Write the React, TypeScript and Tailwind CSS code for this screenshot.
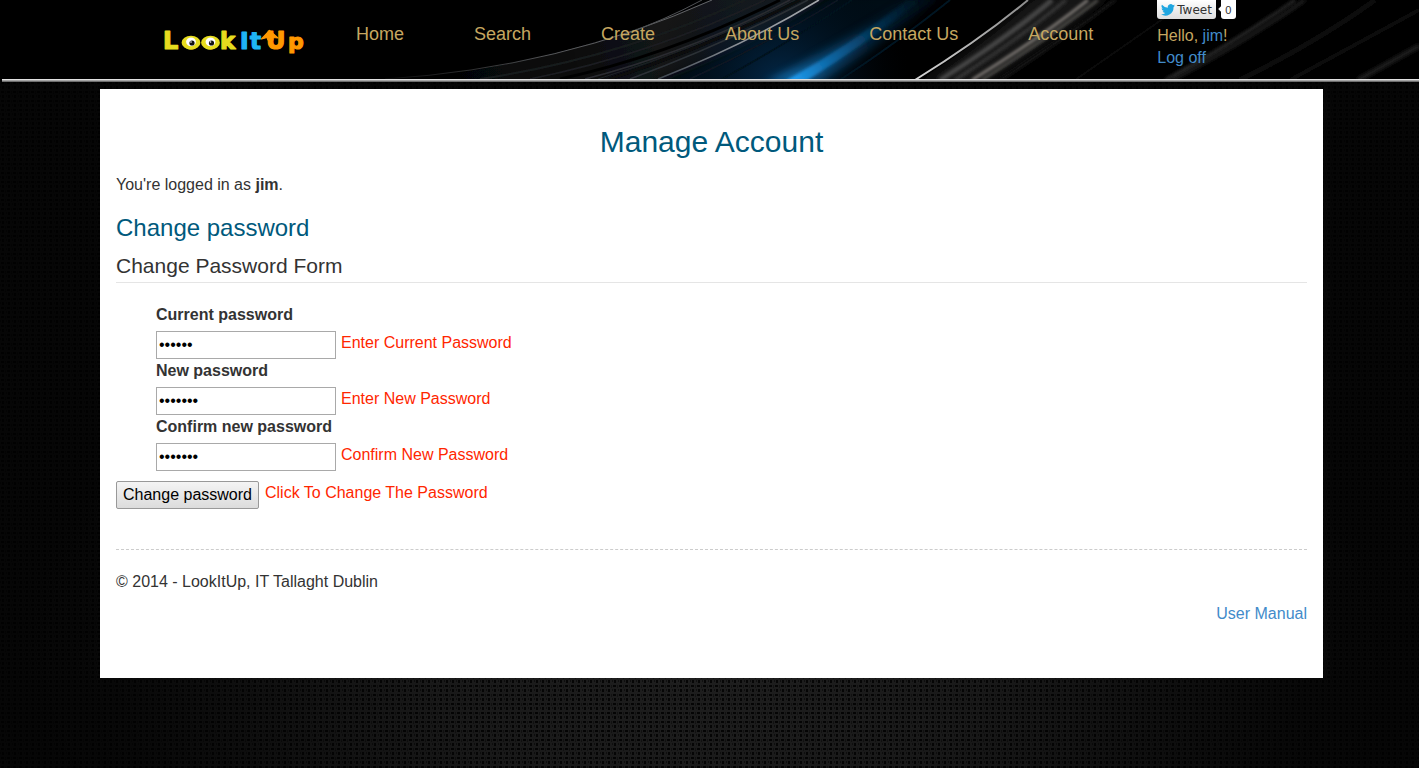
import React from "react";

const NAV = ["Home", "Search", "Create", "About Us", "Contact Us", "Account"];

const FIELDS = [
  { id: "current", label: "Current password", value: "secret", hint: "Enter Current Password" },
  { id: "new", label: "New password", value: "secret1", hint: "Enter New Password" },
  { id: "confirm", label: "Confirm new password", value: "secret1", hint: "Confirm New Password" },
];

function Streaks() {
  return (
    <svg
      className="absolute inset-0 h-full w-full"
      viewBox="0 0 1419 79"
      preserveAspectRatio="none"
      aria-hidden="true"
    >
      <defs>
        <linearGradient id="haze" x1="400" x2="740" y1="79" y2="0" gradientUnits="userSpaceOnUse">
          <stop offset="0" stopColor="#08090a" stopOpacity="0.3" />
          <stop offset="0.6" stopColor="#0e1012" />
          <stop offset="1" stopColor="#1a1b1d" />
        </linearGradient>
        <linearGradient id="fade" x1="390" x2="720" y1="0" y2="0" gradientUnits="userSpaceOnUse">
          <stop offset="0" stopColor="#77797c" stopOpacity="0.1" />
          <stop offset="0.5" stopColor="#77797c" stopOpacity="0.7" />
          <stop offset="1" stopColor="#77797c" stopOpacity="0.8" />
        </linearGradient>
        <linearGradient id="blue" x1="790" x2="920" y1="79" y2="0" gradientUnits="userSpaceOnUse">
          <stop offset="0" stopColor="#1e9cf0" />
          <stop offset="0.3" stopColor="#0d64a0" />
          <stop offset="0.65" stopColor="#04304f" />
          <stop offset="1" stopColor="#010f1a" />
        </linearGradient>
        <radialGradient id="glow" cx="780" cy="85" r="130" gradientUnits="userSpaceOnUse">
          <stop offset="0" stopColor="#03294a" />
          <stop offset="1" stopColor="#01060c" stopOpacity="0" />
        </radialGradient>
        <linearGradient id="silver" x1="915" x2="1030" y1="79" y2="0" gradientUnits="userSpaceOnUse">
          <stop offset="0" stopColor="#d5d5d5" />
          <stop offset="1" stopColor="#8b8b8b" />
        </linearGradient>
        <linearGradient id="steel" x1="658" x2="819" y1="79" y2="0" gradientUnits="userSpaceOnUse">
          <stop offset="0" stopColor="#3d444c" />
          <stop offset="0.5" stopColor="#8d9299" />
          <stop offset="1" stopColor="#a4a7aa" />
        </linearGradient>
        <filter id="soft1" x="-10%" y="-10%" width="120%" height="120%">
          <feGaussianBlur stdDeviation="0.5" />
        </filter>
        <filter id="soft2" x="-10%" y="-10%" width="120%" height="120%">
          <feGaussianBlur stdDeviation="1.4" />
        </filter>
        <filter id="soft3" x="-20%" y="-20%" width="140%" height="140%">
          <feGaussianBlur stdDeviation="4" />
        </filter>
      </defs>
      <rect width="1419" height="79" fill="#000" />
      <path d="M400 79 Q560 66 720 -4 L830 -4 Q770 40 660 83 Z" fill="url(#haze)" filter="url(#soft1)" />
      <path d="M650 83 Q740 55 830 -4 H940 Q860 50 800 83 Z" fill="#010812" filter="url(#soft3)" />
      <rect x="600" width="330" height="79" fill="url(#glow)" />
      <g fill="none" filter="url(#soft1)">
        <path d="M385 79 Q560 68 712 0" stroke="url(#fade)" strokeWidth="1" />
        <path d="M620 36 Q665 20 702 0" stroke="#505255" strokeWidth="1" />
        <path d="M480 79 Q620 58 745 0" stroke="#191b1d" strokeWidth="2" />
        <path d="M530 79 Q650 55 765 0" stroke="#1c1e21" strokeWidth="1.5" />
        <path d="M560 79 Q670 55 780 0" stroke="#020304" strokeWidth="3" />
        <path d="M585 79 Q690 52 790 0" stroke="#2a2c30" strokeWidth="1.5" />
        <path d="M598 79 Q700 48 795 0" stroke="#1f2226" strokeWidth="1" />
        <path d="M610 79 Q710 46 800 0" stroke="#08090b" strokeWidth="3" />
        <path d="M630 79 Q720 46 808 0" stroke="#2c3036" strokeWidth="1.5" />
        <path d="M658 79 Q745 45 819 0" stroke="url(#steel)" strokeWidth="1.5" />
        <path d="M690 79 Q770 42 838 0" stroke="#0a1420" strokeWidth="2" />
        <path d="M722 79 Q790 42 852 0" stroke="#06121e" strokeWidth="2" />
      </g>
      <path d="M765 83 Q840 44 915 -4 H945 Q880 46 818 83 Z" fill="url(#blue)" opacity="0.5" filter="url(#soft3)" />
      <path d="M785 81 Q850 45 908 0 H920 Q865 45 806 81 Z" fill="url(#blue)" filter="url(#soft2)" />
      <path d="M838 81 Q890 48 950 0" fill="none" stroke="#021524" strokeWidth="2" filter="url(#soft1)" />
      <path d="M920 83 Q985 42 1035 -4 H1110 Q1050 45 985 83 Z" fill="#161617" filter="url(#soft3)" />
      <g fill="none" filter="url(#soft2)">
        <path d="M940 80 Q1007 38 1052 0" stroke="#444" strokeWidth="5" />
        <path d="M955 80 Q1020 38 1066 0" stroke="#303030" strokeWidth="4" />
        <path d="M972 80 Q1040 38 1088 0" stroke="#7a7672" strokeWidth="3" />
        <path d="M982 80 Q1048 38 1098 0" stroke="#4a4845" strokeWidth="3" />
        <path d="M1000 80 Q1065 38 1115 0" stroke="#161616" strokeWidth="3" />
        <path d="M1075 80 L1190 0" stroke="#0e0e0e" strokeWidth="2" />
        <path d="M1165 80 Q1235 42 1295 0" stroke="#272727" strokeWidth="3" />
        <path d="M1172 80 Q1245 42 1305 0" stroke="#161616" strokeWidth="4" />
        <path d="M1240 80 Q1320 40 1375 0" stroke="#0e0e0e" strokeWidth="5" />
        <path d="M1290 80 L1419 10" stroke="#0b0b0b" strokeWidth="4" />
        <path d="M1358 80 L1419 46" stroke="#1a1a1a" strokeWidth="5" />
      </g>
      <path d="M915 80 Q980 40 1028 0" fill="none" stroke="url(#silver)" strokeWidth="2" filter="url(#soft1)" />
    </svg>
  );
}

function Logo() {
  return (
    <svg
      className="h-7 w-[150px] shrink-0"
      viewBox="0 0 150 28"
      fontFamily='"DejaVu Sans", sans-serif'
      fontWeight="bold"
      strokeWidth="1.2"
      strokeLinejoin="round"
      role="img"
      aria-label="LookItUp"
    >
      <g fill="#e6dc1e" stroke="#e6dc1e">
        <text x="3" y="23" fontSize="24">L</text>
        <text x="24" y="23" fontSize="20">o</text>
        <text x="43" y="23" fontSize="20">o</text>
        <text x="60" y="23" fontSize="23">k</text>
      </g>
      <g fill="#e6dc1e">
        <ellipse cx="31" cy="16.7" rx="9.4" ry="6.9" />
        <ellipse cx="50.5" cy="16.7" rx="9.4" ry="6.9" />
      </g>
      <g fill="#fff">
        <ellipse cx="31" cy="15.8" rx="4.9" ry="4.4" />
        <ellipse cx="50.5" cy="15.8" rx="4.9" ry="4.4" />
      </g>
      <g fill="#111">
        <circle cx="32" cy="17" r="2.6" />
        <circle cx="51.5" cy="17" r="2.6" />
      </g>
      <g fill="#fff">
        <circle cx="31" cy="16" r="0.8" />
        <circle cx="50.5" cy="16" r="0.8" />
      </g>
      <g fill="#1fb4f5" stroke="#1fb4f5">
        <text x="80" y="23" fontSize="23">I</text>
        <text x="90" y="23" fontSize="23">t</text>
      </g>
      <g fill="#ff9800" stroke="#ff9800">
        <text x="106" y="23" fontSize="24">U</text>
        <path d="M101.5 13 L109.500 4.500 L118 12 L113 11.500 L113 14 L108 14 L107 11.500 Z" />
        <text x="128" y="23" fontSize="22">p</text>
      </g>
    </svg>
  );
}

function TwitterBird() {
  return (
    <svg className="h-3 w-3.5" viewBox="0 0 24 20" fill="#1fa6e0" aria-hidden="true">
      <path d="M24 2.400a10 10 0 0 1-2.800.8A5 5 0 0 0 23.300.4a10 10 0 0 1-3.100 1.200 4.900 4.900 0 0 0-8.400 4.500A14 14 0 0 1 1.700.9a4.900 4.900 0 0 0 1.500 6.600 5 5 0 0 1-2.200-.6 4.900 4.900 0 0 0 3.900 4.900 5 5 0 0 1-2.200.1 4.900 4.900 0 0 0 4.600 3.400A10 10 0 0 1 0 17.300 14 14 0 0 0 21.500 4.900 10 10 0 0 0 24 2.400z" />
    </svg>
  );
}

function Header() {
  return (
    <header className="relative h-[79px] bg-black">
      <Streaks />
      <div className="relative flex h-full items-start pl-40">
        <a href="#home" className="mt-[26px]">
          <Logo />
        </a>
        <nav className="mt-5 ml-[46px] flex gap-[70px] text-lg text-[#c6a760]">
          {NAV.map((item) => (
            <a key={item} href={"#" + item} className="whitespace-nowrap">
              {item}
            </a>
          ))}
        </nav>
        <div className="ml-16 text-base leading-[22px] text-[#c6a760]">
          <div className="flex h-[25px] items-start gap-[5px] text-[11px] text-[#333]">
            <button className="flex h-[19px] items-center gap-0.5 rounded-b-[3px] bg-linear-to-b from-white to-[#dedede] px-1 font-['DejaVu_Sans',sans-serif] text-xs font-medium">
              <TwitterBird />
              Tweet
            </button>
            <span className="relative flex h-[19px] w-[15px] items-center justify-center rounded-b-[3px] bg-white">
              <span className="absolute top-[7px] -left-0.5 size-1 rotate-45 bg-white" />0
            </span>
          </div>
          <div>
            Hello,{" "}
            <a href="#jim" className="text-[#428bca]">
              jim
            </a>
            !
          </div>
          <a href="#logoff" className="block text-[#428bca]">
            Log off
          </a>
        </div>
      </div>
    </header>
  );
}

function Backdrop() {
  return (
    <svg className="absolute inset-0 h-full w-full" aria-hidden="true">
      <defs>
        <pattern id="weave" width="6" height="9" patternUnits="userSpaceOnUse">
          <rect width="6" height="9" fill="#1f1f1f" />
          <rect x="1" y="1" width="3" height="2" fill="#050505" />
          <rect x="2" y="5" width="2" height="3" fill="#060606" />
          <rect x="5" y="1" width="1" height="3" fill="#131313" />
          <rect x="0" y="5" width="1" height="2" fill="#101010" />
        </pattern>
        <radialGradient id="vignette" cx="0.5" cy="0.85" r="0.5">
          <stop offset="0" stopColor="#000" stopOpacity="0" />
          <stop offset="0.4" stopColor="#000" stopOpacity="0.2" />
          <stop offset="0.85" stopColor="#000" stopOpacity="0.75" />
          <stop offset="1" stopColor="#000" stopOpacity="0.82" />
        </radialGradient>
      </defs>
      <rect width="100%" height="100%" fill="url(#weave)" />
      <rect width="100%" height="100%" fill="url(#vignette)" />
    </svg>
  );
}

export default function App() {
  return (
    <div className="relative min-h-screen bg-black font-['Liberation_Sans',sans-serif] text-base text-[#333]">
      <Backdrop />
      <div className="relative">
        <Header />
        <div className="ml-0.5 h-[3px] bg-linear-to-b from-white to-[#555]" />
        <main className="mt-[7px] mr-24 ml-[100px] bg-white px-4 pt-[35px] pb-[52px]">
          <h1 className="text-center text-[30px] leading-9 text-[#00597c]">Manage Account</h1>
          <p className="mt-[13px] leading-6">
            You're logged in as <strong>jim</strong>.
          </p>
          <h2 className="mt-[15px] text-2xl leading-8 text-[#00597c]">Change password</h2>
          <form onSubmit={(e) => e.preventDefault()}>
            <fieldset>
              <legend className="w-full border-b border-[#e5e5e5] pt-2 pb-0.5 text-[21px] leading-7">
                Change Password Form
              </legend>
              <ol className="mt-5 ml-10">
                {FIELDS.map((f) => (
                  <li key={f.id}>
                    <label htmlFor={f.id} className="block h-7 leading-6 font-bold">
                      {f.label}
                    </label>
                    <div className="flex h-7 gap-[5px]">
                      <input
                        id={f.id}
                        type="password"
                        defaultValue={f.value}
                        className="h-7 w-[180px] border border-[#a9a9a9] bg-white px-0.5 text-base text-black"
                      />
                      <span className="leading-6 text-[#ff2600]">{f.hint}</span>
                    </div>
                  </li>
                ))}
              </ol>
              <div className="mt-[10px] flex gap-1.5">
                <button className="h-7 rounded-xs border border-[#999] bg-linear-to-b from-[#f4f4f4] to-[#dcdcdc] px-1.5 text-black">
                  Change password
                </button>
                <span className="leading-6 text-[#ff2600]">Click To Change The Password</span>
              </div>
            </fieldset>
          </form>
          <footer className="mt-10 border-t border-dashed border-[#ccc] pt-5">
            <p className="leading-6">© 2014 - LookItUp, IT Tallaght Dublin</p>
            <p className="mt-2 text-right leading-6">
              <a href="#manual" className="text-[#428bca]">
                User Manual
              </a>
            </p>
          </footer>
        </main>
      </div>
    </div>
  );
}
